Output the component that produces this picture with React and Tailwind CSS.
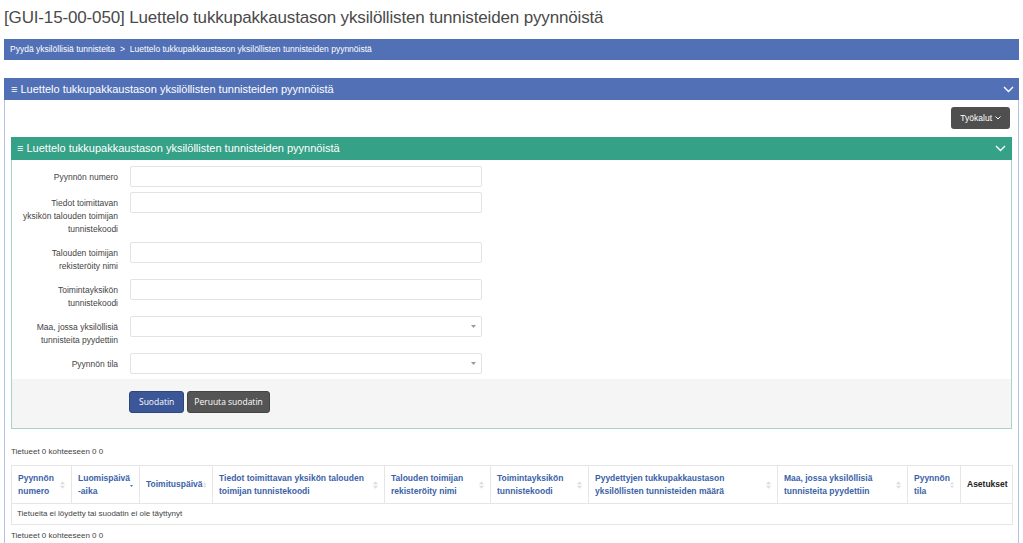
import React from 'react';

const formRows = [
  { label: ['Pyynnön numero'], type: 'input' },
  { label: ['Tiedot toimittavan', 'yksikön talouden toimijan', 'tunnistekoodi'], type: 'input' },
  { label: ['Talouden toimijan', 'rekisteröity nimi'], type: 'input' },
  { label: ['Toimintayksikön', 'tunnistekoodi'], type: 'input' },
  { label: ['Maa, jossa yksilöllisiä', 'tunnisteita pyydettiin'], type: 'select' },
  { label: ['Pyynnön tila'], type: 'select' },
];

const columns = [
  { title: ['Pyynnön', 'numero'], w: 60 },
  { title: ['Luomispäivä', '-aika'], w: 68, active: true },
  { title: ['Toimituspäivä'], w: 73 },
  { title: ['Tiedot toimittavan yksikön talouden', 'toimijan tunnistekoodi'], w: 172 },
  { title: ['Talouden toimijan', 'rekisteröity nimi'], w: 106 },
  { title: ['Toimintayksikön', 'tunnistekoodi'], w: 98 },
  { title: ['Pyydettyjen tukkupakkaustason', 'yksilöllisten tunnisteiden määrä'], w: 189 },
  { title: ['Maa, jossa yksilöllisiä', 'tunnisteita pyydettiin'], w: 130 },
  { title: ['Pyynnön', 'tila'], w: 53 },
  { title: ['Asetukset'], w: 52, plain: true },
];

const Chevron = () => (
  <svg width="11" height="7" viewBox="0 0 11 7" fill="none">
    <path d="M1 1l4.5 4.5L10 1" stroke="white" strokeWidth="1.4" />
  </svg>
);

const SortIcon = ({ active }) => (
  <svg width="5" height="10" viewBox="0 0 5 10">
    {active ? (
      <path d="M0 5h5L2.5 8.5z" fill="#5b6fb8" />
    ) : (
      <>
        <path d="M0 4.2h5L2.5 1.2z" fill="#dcdcdc" />
        <path d="M0 5.8h5L2.5 8.8z" fill="#dcdcdc" />
      </>
    )}
  </svg>
);

const App = () => {
  return (
    <div className="w-[1023px] h-[543px] overflow-hidden bg-white font-['Liberation_Sans',Arial,sans-serif] text-[#333]">
      {/* Title */}
      <h1 className="pl-[4px] pt-[7px] h-[39px] text-[17px] leading-[22px] text-[#4a4a4a] tracking-[-0.15px]">
        [GUI-15-00-050] Luettelo tukkupakkaustason yksilöllisten tunnisteiden pyynnöistä
      </h1>

      <div className="px-[4px]">
        {/* Breadcrumb */}
        <div className="h-[21px] bg-[#5170b6] flex items-center pl-[6px] text-[8.5px] text-white">
          <span>Pyydä yksilöllisiä tunnisteita</span>
          <span className="mx-[5px]">&gt;</span>
          <span>Luettelo tukkupakkaustason yksilöllisten tunnisteiden pyynnöistä</span>
        </div>

        {/* Outer panel */}
        <div className="mt-[18px] border-x border-[#b3c1e2] h-[500px]">
          <div className="h-[22px] bg-[#5170b6] -mx-px flex items-center justify-between pl-[7px] pr-[5px] text-white text-[11px]">
            <span>≡ Luettelo tukkupakkaustason yksilöllisten tunnisteiden pyynnöistä</span>
            <Chevron />
          </div>

          <div className="px-[6px] pt-[7px]">
            <div className="flex justify-end pr-[2px]">
              <button className="h-[22px] px-[9px] rounded-[3px] bg-[#4f4f4f] text-white text-[8.5px] flex items-center gap-[3px]">
                Työkalut
                <svg width="6" height="4" viewBox="0 0 6 4" fill="none">
                  <path d="M0.5 0.5L3 3l2.5-2.5" stroke="white" strokeWidth="1" />
                </svg>
              </button>
            </div>

            {/* Filter panel */}
            <div className="mt-[8px] border border-[#a6d6c8]">
              <div className="h-[23px] bg-[#35a187] -mx-px -mt-px flex items-center justify-between pl-[6px] pr-[6px] text-white text-[11px]">
                <span>≡ Luettelo tukkupakkaustason yksilöllisten tunnisteiden pyynnöistä</span>
                <Chevron />
              </div>

              <div className="pt-[6px]">
                {formRows.map((row, i) => (
                  <div key={i} className="flex mb-[5px]">
                    <div className="w-[106px] pt-[5px] pb-px text-right text-[8.5px] leading-[13px] text-[#444]">
                      {row.label.map((l, j) => (
                        <div key={j}>{l}</div>
                      ))}
                    </div>
                    <div className="ml-[12px] w-[352px] h-[21px] border border-[#e3e3e3] rounded-[2px] bg-white flex items-center justify-end pr-[5px]">
                      {row.type === 'select' && (
                        <svg width="5" height="3" viewBox="0 0 5 3">
                          <path d="M0 0h5L2.5 3z" fill="#999" />
                        </svg>
                      )}
                    </div>
                  </div>
                ))}
              </div>

              <div className="bg-[#f5f5f5] pt-[12px] pb-[15px] pl-[117px] flex gap-[3px]">
                <button className="h-[22px] px-[9px] rounded-[3px] bg-[#3b5797] border border-[#2f467c] text-white text-[8.5px] font-['Open_Sans',sans-serif]">
                  Suodatin
                </button>
                <button className="h-[22px] px-[6px] rounded-[3px] bg-[#555] border border-[#444] text-white text-[8.5px] font-['Open_Sans',sans-serif]">
                  Peruuta suodatin
                </button>
              </div>
            </div>

            <div className="mt-[18px] text-[8px] leading-[10px] text-[#444]">Tietueet 0 kohteeseen 0 0</div>

            {/* Table */}
            <table className="mt-[8px] w-[1001px] table-fixed border-collapse border border-[#e6e6e6]">
              <colgroup>
                {columns.map((c, i) => (
                  <col key={i} style={{ width: c.w }} />
                ))}
              </colgroup>
              <thead>
                <tr className="h-[38px]">
                  {columns.map((c, i) => (
                    <th key={i} className="border-r border-[#e6e6e6] px-[6px] text-left align-middle">
                      <div className="flex items-center justify-between">
                        <div className={`text-[8.5px] leading-[13px] font-bold ${c.plain ? 'text-[#222]' : 'text-[#3b62a8]'}`}>
                          {c.title.map((t, j) => (
                            <div key={j} className="whitespace-nowrap">{t}</div>
                          ))}
                        </div>
                        {!c.plain && <SortIcon active={c.active} />}
                      </div>
                    </th>
                  ))}
                </tr>
              </thead>
              <tbody>
                <tr className="h-[21px] border-t border-[#e6e6e6]">
                  <td colSpan={10} className="px-[5px] text-[8px] text-[#444]">
                    Tietueita ei löydetty tai suodatin ei ole täyttynyt
                  </td>
                </tr>
              </tbody>
            </table>

            <div className="mt-[6px] text-[8px] leading-[10px] text-[#444]">Tietueet 0 kohteeseen 0 0</div>
          </div>
        </div>
      </div>
    </div>
  );
};

export default App;
